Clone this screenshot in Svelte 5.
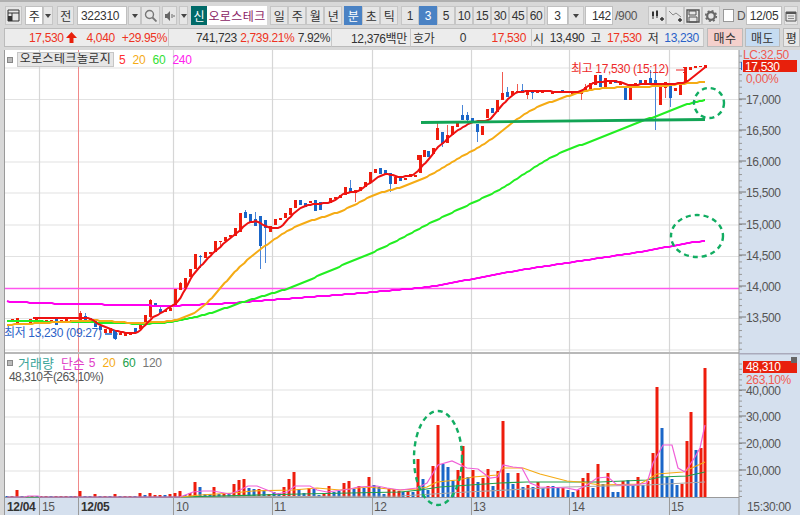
<script>
  const RED = '#ee1c0c', BLUE = '#1a66c8';
  const tfA = ['일', '주', '월', '년'];
  const tfB = [['분', true], ['초', false], ['틱', false]];
  const mins = [['1', false], ['3', true], ['5', false], ['10', false], ['15', false], ['30', false], ['45', false], ['60', false]];

  const vgrid = [39.5, 173.5, 272.5, 372.5, 471.5, 569.5, 669.5];
  const hgrid = [68, 99.5, 131, 162, 193, 225, 256.5, 318.5, 350];
  const vhgrid = [390, 417, 444, 471];
  const priceLabels = [[17000, 99], [16500, 130], [16000, 161], [15500, 192], [15000, 224], [14500, 255], [14000, 286], [13500, 317]];
  const volLabels = [['40,000', 390], ['30,000', 416], ['20,000', 443], ['10,000', 470]];
  const timeLabels = [['15', 42], ['10', 176], ['11', 274], ['12', 374], ['13', 473], ['14', 572], ['15', 671]];

  const ticks = [];
  for (let y = 56; y < 352; y += 6.24) ticks.push(y);
  const vticks = [];
  for (let y = 364; y < 497; y += 5.3) vticks.push(y);

  // x, body top, body bottom, colour (0 red, 1 blue), wick top, wick bottom
  const candles = [
    [12,319,322,0],[17,318,325,0],[22,320,322,0],[30,319,325,0],[36,319,321,0],[41,320,322,1],[46,320,322,0],[51,320,321,0],[56,318,325,1],[61,320,322,0],[66,319,321,0],[71,320,322,0],[75,320,321,1],
    [80,313,322,0,311,323],[85,316,322,1,313,323],[90,318,322,1],[95,320,327,1],[100,326,330,1],[105,329,333,0],[110,328,333,0],[115,331,339,1,330,340],[120,333,335,0],[125,333,336,0],[130,333,335,0],
    [135,328,333,1],[140,325,329,0],[145,315,325,0],[150,300,317,0,299,318],[155,303,305,1],[160,309,313,1,305,313],[165,310,312,0],[170,308,311,0],
    [175,289,306,0],[180,283,290,0,282,290],[185,278,288,0],[190,269,277,0],[195,254,269,0],[200,256,257,1,255,268],[205,252,258,0],[210,252,254,0],[215,241,252,0],[220,241,242,0,241,246],[225,237,241,0],[230,235,237,0],[235,228,236,0],
    [240,213,232,0],[245,212,218,1,210,218],[250,214,222,1],[255,219,226,1,212,226],[260,216,246,1,216,269],[265,220,228,1,220,263],[270,226,232,0],[275,219,225,0],[280,218,220,0],[285,213,218,0],[290,208,215,0],[295,200,208,0],[300,200,205,1],[305,203,207,1],[310,201,203,0],[315,200,211,1],[320,202,210,1],[325,203,204,0],[330,198,203,0],[335,197,199,0],[340,195,198,0],[345,187,195,0],
    [350,188,192,1,180,192],[355,190,193,0,190,202],[360,187,191,0],[365,182,187,0],[370,172,183,0],[375,169,173,0],[380,168,174,1],[385,170,174,1],[390,173,184,1,173,192],[395,177,184,0],[400,177,181,1],[405,178,180,0],[410,174,177,0],[415,175,177,0],[420,155,173,0],[424,150,157,0],
    [418,155,160,0],[428,151,157,1],[433,148,154,0],[437,128,140,0,122,140],[442,132,144,1,132,147],[447,135,143,0,125,143],[452,126,135,0],[457,123,127,0],[462,115,120,1,105,120],[467,115,120,1,112,123],[472,118,123,1],[477,124,132,1,124,142],[482,126,135,0],[487,109,118,0],[492,108,113,1],[497,100,112,0],[502,93,100,0,72,100],[507,92,97,1,87,97],
    [512,91,95,0],[517,91,93,0,84,93],[522,90,93,1,84,93],[527,92,95,0,92,99],[532,91,93,1,91,99],[537,91,93,0],[542,91,93,0],[547,90,92,1],[552,91,94,0],[557,91,93,0],[562,90,93,1],[567,91,93,0],[572,92,94,0],[577,91,93,0],[581,92,94,0,92,100],[585,87,92,0,84,92],[590,83,89,0],[595,75,85,0],[600,75,87,1],[605,78,87,0],[610,80,84,0],[615,80,83,1],[620,82,85,0],
    [625,87,100,1],[630,87,100,0],[635,83,88,0],[640,80,85,1],[645,80,85,0],[650,78,85,1,70,85],[655,80,85,1,72,130],[660,87,105,0],[665,82,88,0,82,98],[670,83,98,1,83,107],[675,88,91,0],[680,83,95,0],[685,67,83,0],[690,67,70,0],[695,66,68,0],[700,66,67,0],[705,65,67,0]
  ];

  const vol = [
    [7,1,1],[12,1,0],[17,7,0],[22,1,1],[27,1,0],[32,1,0],[37,1,1],[41,1,0],[46,1,0],[51,1,1],[56,1,0],[61,1,0],[66,1,0],[71,1,1],[75,1,0],
    [80,6,0],[85,1,1],[90,1,1],[95,3,0],[100,1,1],[105,1,0],[110,1,1],[115,3,0],[120,1,1],[125,1,0],[130,1,0],[135,1,1],[140,4,0],[145,2,1],[150,4,0],[155,2,0],[160,2,0],[165,2,1],[170,3,0],[175,4,0],[180,6,0],[185,2,1],[190,4,0],[195,15,0],[200,10,1],[205,3,1],[210,3,1],[214,10,0],[219,3,1],[224,4,0],[229,4,1],[234,13,0],[239,17,0],[244,18,0],[249,9,1],[254,8,1],[259,8,0],[264,7,1],[269,3,0],[274,5,1],[279,4,1],[284,10,0],[289,18,0],[294,25,0],[299,8,1],[304,4,1],[309,9,0],[314,8,1],[319,2,1],[324,4,0],[329,11,0],[334,5,1],[339,6,1],[344,14,0],[349,16,0],[354,8,1],[359,11,0],[364,9,1],[369,20,0],[374,12,1],[379,10,1],[384,3,1],[389,8,0],[394,8,0],[399,6,0],
    [403,5,1],[408,6,0],[413,5,1],[418,38,0],[423,18,1],[428,7,1],[433,31,0],[438,72,0],[443,33,1],[448,30,1],[453,16,1],[458,27,0],[463,51,0],[468,20,1],[473,27,0],[478,15,1],[483,19,0],[488,28,0],[493,11,1],[498,26,0],[503,76,0],[508,24,1],[513,13,1],[518,24,0],[523,10,1],[528,12,0],[533,10,1],[538,15,0],[543,9,1],[548,11,0],[553,11,1],[558,9,1],[563,9,0],[568,7,1],[573,5,1],[578,7,0],[583,19,0],[588,24,0],[593,9,1],[598,33,0],[603,13,1],[608,24,0],[613,5,1],[618,5,1],[623,16,0],[628,17,1],[633,12,1],[638,20,0],[643,12,1],[648,16,0],[653,44,0],[657,110,0],[662,69,1],[667,20,1],[672,18,1],[677,12,1],[682,13,0],[687,56,0],[691,85,0],[696,47,1],[701,49,0],[705,129,0]
  ];

  // Resample a coarse trace the way the platform draws it: one point every few pixels, on whole pixels.
  function stair(s, win) {
    const p = s.split(' ').map((a) => a.split(',').map(Number));
    const xs = [], ys = [];
    let k = 0;
    for (let x = p[0][0]; x <= p[p.length - 1][0]; x += 2.5) {
      while (k < p.length - 2 && x > p[k + 1][0]) k++;
      const [x0, y0] = p[k], [x1, y1] = p[k + 1];
      xs.push(x);
      ys.push(y0 + ((y1 - y0) * (x - x0)) / (x1 - x0));
    }
    xs.push(p[p.length - 1][0]);
    ys.push(p[p.length - 1][1]);
    return xs.map((x, i) => {
      let sum = 0, n = 0;
      for (let j = Math.max(0, i - win); j <= Math.min(ys.length - 1, i + win); j++) { sum += ys[j]; n++; }
      return `${x},${Math.round(sum / n)}`;
    }).join(' ');
  }

  const ma5 = stair('33,318 60,318 90,318 100,325 113,330 127,333 137,333 143,327 153,317 163,312 170,307 178,302 185,290 192,275 200,267 213,253 228,240 237,233 247,223 258,221 268,228 280,228 287,220 297,210 307,205 327,203 337,200 343,193 357,192 370,183 383,174 390,174 397,177 413,176 423,165 429,160 437,147 443,143 455,132 472,122 490,120 498,110 507,100 517,92 533,91 573,92 580,92 593,83 607,81 617,81 627,85 650,84 667,84 685,83 707,66', 1);
  const ma20 = stair('7,325 60,322 100,320 127,323 167,322 187,318 207,305 220,288 243,263 270,242 297,225 313,220 343,211 377,193 397,189 430,176 455,160 480,147 500,133 513,122 530,110 550,102 580,92 600,88 633,87 667,86 687,83 705,82', 5);
  const ma60 = stair('7,321 80,322 147,324 173,322 213,313 233,305 267,295 293,287 343,265 383,248 430,223 500,190 547,159 567,150 600,138 640,122 667,112 693,102 705,99', 5);
  const ma240 = stair('7,301 33,303 73,304 133,305 170,306 233,303 270,300 350,294 430,287 520,270 600,258 640,252 705,240', 5);

  const vm = '7,497 25,497 28,496 38,496 41,497 180,497 193,492 203,491 213,491 230,494 240,490 248,486 257,486 267,490 277,494 287,492 295,486 310,486 317,490 327,492 350,489 358,487 377,486 387,488 400,490 417,488 427,483 438,465 452,461 467,468 478,469 490,478 498,477 503,465 513,467 522,468 530,483 540,487 567,488 577,490 587,485 597,478 608,477 617,485 633,485 647,483 653,463 663,445 672,445 678,468 685,472 695,457 700,448 705,425';
  const vo = '180,497 200,495 233,493 253,491 293,490 317,488 340,490 367,487 400,490 417,489 427,487 437,482 457,480 473,477 497,475 503,468 523,468 540,474 567,481 580,482 600,485 640,484 657,474 683,472 705,462';
  const vg = '7,497 180,497 300,494 400,492 420,490 440,487 500,483 527,482 600,482 647,480 660,477 687,476 705,472';
  const vy = '180,497 400,496 467,492 567,487 647,485 705,482';
</script>

<div class="page">
  <div class="toolbar">
    <button class="btn w17" aria-label="layout">
      <svg width="13" height="13" viewBox="0 0 13 13"><path d="M1 1h11v11H1zM1 4h11M5 4v8" fill="none" stroke="#333"/><path d="M1 7h4v5H1z" fill="#333"/></svg>
    </button>
    <div class="box w18 ml3">주</div>
    <button class="btn w10 dd" aria-label="open"><i></i></button>
    <button class="btn w17 ml4">전</button>
    <div class="box w50 ml3 left">322310</div>
    <button class="btn w13 ml1 dd" aria-label="open"><i></i></button>
    <button class="btn w19" aria-label="search">
      <svg width="13" height="13" viewBox="0 0 13 13"><circle cx="5.5" cy="5.5" r="4" fill="none" stroke="#777" stroke-width="1.4"/><path d="M8.5 8.5l4 4" stroke="#777" stroke-width="1.8"/></svg>
    </button>
    <button class="btn w15 ml2" aria-label="sound">
      <svg width="12" height="12" viewBox="0 0 12 12"><path d="M1 4h2l3-3v10L3 8H1z" fill="#666"/><path d="M8 4v4M10 5v2" stroke="#666"/></svg>
    </button>
    <button class="btn w9 ml2 dd" aria-label="open"><i></i></button>
    <div class="sin ml3">신</div>
    <div class="name">오로스테크</div>
    {#each tfA as t, i}<button class="btn w18 {i === 0 ? 'ml3' : ''}">{t}</button>{/each}
    {#each tfB as [t, on], i}<button class="btn w18 {i === 0 ? 'ml2' : ''}" class:on>{t}</button>{/each}
    {#each mins as [t, on], i}<button class="btn w18 {i === 0 ? 'ml3' : ''}" class:on>{t}</button>{/each}
    <div class="box w21 ml2">3</div>
    <button class="btn w16 dd" aria-label="open"><i></i></button>
    <div class="box w28 ml1 right">142</div>
    <span class="plain ml2">/900</span>
    <button class="btn w18 ml11" aria-label="add candles">
      <svg width="15" height="15" viewBox="0 0 15 15"><path d="M3 3v8M7 2v8" stroke="#333"/><path d="M2 4h2v4H2zM6 3h2v5H6z" fill="#333"/><path d="M10 11h4M12 9v4" stroke="#333" stroke-width="1.4"/></svg>
    </button>
    <button class="btn w18" aria-label="add line">
      <svg width="15" height="15" viewBox="0 0 15 15"><path d="M1 3l4 4 3-2 5 4" fill="none" stroke="#888"/><path d="M10 12h4M12 10v4" stroke="#333" stroke-width="1.4"/></svg>
    </button>
    <button class="btn w18" aria-label="save">
      <svg width="14" height="14" viewBox="0 0 14 14"><path d="M1 1h12v12H1z" fill="none" stroke="#555" stroke-width="1.4"/><path d="M3 2h7v4H3zM3 8h8v5H3z" fill="none" stroke="#555"/></svg>
    </button>
    <button class="btn w18" aria-label="settings">
      <svg width="14" height="14" viewBox="0 0 14 14"><circle cx="7" cy="7" r="3.8" fill="none" stroke="#666" stroke-width="2.2"/><circle cx="7" cy="7" r="5.3" fill="none" stroke="#666" stroke-width="1.6" stroke-dasharray="2 2.16"/></svg>
    </button>
    <div class="check ml3"></div>
    <span class="plain d">D</span>
    <div class="box w36">12/05</div>
    <button class="btn w14 ml2" aria-label="calendar">
      <svg width="12" height="12" viewBox="0 0 12 12"><path d="M1 2h10v9H1z" fill="none" stroke="#555"/><path d="M1 2h10v2H1z" fill="#555"/><path d="M3 6h6M3 8.500h6" stroke="#888"/></svg>
    </button>
  </div>

  <div class="info">
    <div class="cell c1">
      <span class="r wide-l">17,530<svg class="arrow" width="13" height="13" viewBox="0 0 13 13"><path d="M6.500 1L12 7H8.500v5h-4V7H1z" fill="#e8200c"/></svg></span>
      <span class="r">4,040</span><span class="r">+29.95%</span>
    </div>
    <div class="cell c2"><span class="k">741,723</span><span class="r">2,739.21%</span><span class="k">7.92%</span></div>
    <div class="cell c3"><span class="k">12,376백만</span></div>
    <div class="cell c4"><span class="k">호가</span><span class="k">0</span><span class="r">17,530</span></div>
    <div class="cell c5">
      <span class="k">시</span><span class="k">13,490</span><span class="k">고</span><span class="r">17,530</span><span class="k">저</span><span class="b">13,230</span>
    </div>
    <button class="act buy">매수</button>
    <button class="act sell">매도</button>
    <button class="act flat">평</button>
  </div>

  <div class="chart">
    <svg width="800" height="465" viewBox="0 50 800 465" role="img" aria-label="chart">
      <rect x="0" y="50" width="5" height="465" fill="#d8d8d8" />
      <rect x="5" y="50" width="734" height="447" fill="#fff" />
      <rect x="739" y="50" width="61" height="465" fill="#d5e0ee" />
      <rect x="5" y="497" width="734" height="18" fill="#d5e0ee" />
      <rect x="4" y="50" width="1" height="465" fill="#9a9a9a" />

      {#each hgrid as y}<line x1="5" x2="739" y1={y} y2={y} stroke="#e2e2e2" stroke-width="1.2" />{/each}
      {#each vhgrid as y}<line x1="5" x2="739" y1={y} y2={y} stroke="#e2e2e2" stroke-width="1.2" />{/each}
      {#each vgrid as x}<line x1={x} x2={x} y1="50" y2="515" stroke="#d6d6d6" stroke-width="1.2" />{/each}
      <line x1="78.500" x2="78.500" y1="50" y2="515" stroke="#f08a8a" />
      <rect x="5" y="352" width="734" height="2" fill="#b8b8b8" />
      <rect x="5" y="497" width="734" height="1" fill="#9a9a9a" />

      <line x1="5" x2="739" y1="288.500" y2="288.500" stroke="#ff55ee" stroke-width="1.6" />

      {#each candles as [x, t, b, c, h, l]}
        {#if h !== undefined}<rect x={x} y={h} width="1" height={l - h} fill={c ? '#4a86d8' : '#f05a50'} />{/if}
        <rect x={x - 1} y={t} width="3" height={b - t} fill={c ? BLUE : RED} />
      {/each}

      <polyline points={ma240} fill="none" stroke="#ff00ee" stroke-width="2" />
      <polyline points={ma60} fill="none" stroke="#22ee22" stroke-width="2" />
      <polyline points={ma20} fill="none" stroke="#f5ab14" stroke-width="2" />
      <polyline points={ma5} fill="none" stroke="#ee1111" stroke-width="2" />

      <line x1="421" y1="122.500" x2="705" y2="119.500" stroke="#12a455" stroke-width="2.800" />
      <ellipse cx="709" cy="103" rx="15" ry="15" fill="none" stroke="#12ad62" stroke-width="2.400" stroke-dasharray="5 4" />
      <ellipse cx="697" cy="236" rx="26" ry="21" fill="none" stroke="#12ad62" stroke-width="2.400" stroke-dasharray="5 4" />

      <text x="571" y="73" class="t hi">최고 17,530 (15:12)</text>
      <path d="M676 70h9M683 67l3 3-3 3" fill="none" stroke="#ee2222" />
      <text x="4" y="337" class="t lo">최저 13,230 (09:27)</text>
      <path d="M105 334h7" stroke={BLUE} stroke-width="1.500" />
      <path d="M113 329l5 5-5 5z" fill={BLUE} />

      {#each vol as [x, h, c]}
        <rect x={x - 1.500} y={497 - h} width="3" height={h} fill={c ? BLUE : RED} />
      {/each}
      <polyline points={vy} fill="none" stroke="#a8a8a8" stroke-width="1.200" />
      <polyline points={vg} fill="none" stroke="#22a04a" stroke-width="1.200" />
      <polyline points={vo} fill="none" stroke="#f5ab14" stroke-width="1.200" />
      <polyline points={vm} fill="none" stroke="#f060d8" stroke-width="1.200" />
      <ellipse cx="438" cy="458" rx="24" ry="47" fill="none" stroke="#12ad62" stroke-width="2.400" stroke-dasharray="5 4" />

      <rect x="738.500" y="50" width="1" height="465" fill="#9a9a9a" />
      {#each ticks as y}<line x1="739" x2="742" y1={y} y2={y} stroke="#999" />{/each}
      {#each vticks as y}<line x1="739" x2="742" y1={y} y2={y} stroke="#999" />{/each}
      {#each priceLabels as [, y]}<line x1="739" x2="746" y1={y} y2={y} stroke="#777" />{/each}
      {#each volLabels as [, y]}<line x1="739" x2="746" y1={y} y2={y} stroke="#777" />{/each}
      <rect x="739" y="353" width="61" height="1.500" fill="#aab" />

      {#each priceLabels as [p, y]}<text x="746" y={y + 5} class="t ax">{p.toLocaleString('en-US')}</text>{/each}
      {#each volLabels as [s, y]}<text x="746" y={y + 5} class="t ax">{s}</text>{/each}

      <text x="743" y="59" class="t pink">LC:32,50</text>
      <rect x="741" y="62" width="1" height="8" fill="#2a62c8" />
      <rect x="743" y="60" width="54" height="12" fill="#e8200c" />
      <text x="745" y="70.500" class="t wh">17,530</text>
      <text x="746" y="83" class="t pink">0,00%</text>

      <rect x="743" y="361" width="54" height="12" fill="#e8200c" />
      <text x="746" y="371" class="t wh">48,310</text>
      <text x="746" y="384" class="t pink">263,10%</text>
      <rect x="791" y="357" width="6" height="6" fill="#666" />

      <text x="7" y="511" class="t bold">12/04</text>
      <text x="81" y="511" class="t bold">12/05</text>
      {#each timeLabels as [s, x]}<text x={x} y="511" class="t ax">{s}</text>{/each}
      <text x="747" y="511" class="t ax">15:30:00</text>
      {#each vgrid as x}<line x1={x} x2={x} y1="497" y2="515" stroke="#9a9a9a" />{/each}
      <line x1="78.500" x2="78.500" y1="497" y2="515" stroke="#9a9a9a" />
    </svg>

    <div class="legend top">
      <i class="sq"></i>
      <span class="stock">오로스테크놀로지</span>
      <span class="cr">5</span><span class="co">20</span><span class="cg">60</span><span class="cm">240</span>
    </div>
    <div class="legend vol">
      <i class="sq"></i>
      <span class="ct">거래량</span><span class="cm2">단순</span><span class="cm2 n5">5</span><span class="co">20</span><span class="cg2">60</span><span class="cgr">120</span>
    </div>
    <div class="volnote">48,310주(263,10%)</div>
  </div>
</div>

<style>
  :global(body) { margin: 0; background: #d8d8d8; }
  .page {
    width: 800px; height: 515px; overflow: hidden; background: #d8d8d8;
    font-family: "Liberation Sans", "Noto Sans CJK KR", sans-serif;
    font-size: 12px; color: #333;
  }
  .toolbar {
    display: flex; align-items: stretch; height: 19px;
    padding: 4px 0 0 5px; border-top: 2px solid #b0b0b0; box-sizing: content-box;
  }
  .btn, .box, .act {
    font: inherit; margin: 0; padding: 0; box-sizing: border-box;
    display: flex; align-items: center; justify-content: center; letter-spacing: -0.3px;
  }
  .btn { background: #e6e6e6; border: 1px solid #c6c6c6; color: #333; }
  .btn.on { background: #4a82c4; border-color: #4a82c4; color: #fff; }
  .box { background: #fff; border: 1px solid #c0c0c0; color: #333; }
  .box.left { justify-content: flex-start; padding-left: 3px; }
  .box.right { justify-content: flex-end; padding-right: 1px; }
  .dd i { width: 0; height: 0; border: 3.500px solid transparent; border-top: 4px solid #444; border-bottom: 0; }
  .w9 { width: 9px; } .w10 { width: 10px; } .w13 { width: 13px; } .w14 { width: 14px; } .w15 { width: 15px; }
  .w16 { width: 16px; } .w17 { width: 17px; } .w18 { width: 18px; } .w19 { width: 19px; } .w21 { width: 21px; }
  .w28 { width: 28px; } .w36 { width: 36px; } .w50 { width: 50px; }
  .ml1 { margin-left: 1px; } .ml2 { margin-left: 2px; } .ml3 { margin-left: 3px; } .ml4 { margin-left: 4px; } .ml11 { margin-left: 11px; }
  .sin {
    width: 16px; background: #006a68; color: #fff; display: flex; align-items: center; justify-content: center; box-sizing: border-box;
  }
  .name {
    width: 60px; background: #fff; color: #8a1c64; display: flex; align-items: center; justify-content: center;
    letter-spacing: 0.4px; white-space: nowrap; overflow: hidden;
  }
  .plain { display: flex; align-items: center; color: #555; letter-spacing: -0.3px; width: 22px; }
  .plain.d { width: 9px; margin-left: 3px; }
  .check { width: 11px; height: 13px; align-self: center; background: #fff; border: 1px solid #999; box-sizing: border-box; }

  .info {
    display: flex; height: 19px; margin: 3px 0 0 4px; align-items: stretch;
    letter-spacing: -0.35px; white-space: nowrap;
  }
  .cell {
    display: flex; align-items: center; justify-content: space-between; box-sizing: border-box;
    background: #ececec; border: 1px solid #bbb; border-right-color: #c8c8c8; border-left: 0;
  }
  .c1 { width: 165px; padding: 0 1px 0 24px; border-left: 1px solid #bbb; }
  .c2 { width: 163px; padding: 0 1px 0 27px; }
  .c3 { width: 79px; padding-left: 19px; }
  .c4 { width: 121px; padding: 0 5px 0 2px; }
  .c5 { width: 172px; padding: 0 4px 0 1px; }
  .r { color: #ee3322; display: inline-flex; align-items: center; }
  .k { color: #333; }
  .b { color: #2a62c8; }
  .wide-l { margin-right: 2px; }
  .arrow { margin-left: 1px; }
  .act { border: 1px solid #bbb; color: #333; letter-spacing: 0.5px; }
  .buy { width: 36px; margin-left: 3px; background: #f4d0cc; }
  .sell { width: 35px; margin-left: 2px; background: #c6dcf2; }
  .flat { width: 17px; margin-left: 3px; background: #e8e8e8; }

  .chart { position: relative; margin-top: 3px; height: 465px; }
  .chart svg { display: block; }
  .t { font-family: "Liberation Sans", "Noto Sans CJK KR", sans-serif; font-size: 12px; letter-spacing: -0.35px; }
  .hi { fill: #ee2a2a; }
  .lo { fill: #2a62c8; }
  .ax { fill: #555; }
  .pink { fill: #f05a50; }
  .wh { fill: #fff; }
  .bold { fill: #333; font-weight: 700; }

  .legend { position: absolute; left: 7px; display: flex; align-items: center; gap: 7px; height: 15px; white-space: nowrap; letter-spacing: -0.2px; }
  .legend.top { top: 2px; }
  .legend.vol { top: 305px; }
  .sq { width: 4px; height: 4px; background: #bbb; border: 1px solid #888; margin-right: -2px; }
  .stock { background: #e6e6e6; border: 1px solid #c6c6c6; width: 97px; height: 15px; box-sizing: border-box; line-height: 13px; text-align: center; margin: 0 -2px 0 -1px; overflow: hidden; color: #333; letter-spacing: 0.4px; }
  .cr { color: #ff3030; } .co { color: #f5ab14; } .cg { color: #33e033; } .cm { color: #ff22ee; }
  .ct { color: #3aa59a; font-size: 13px; letter-spacing: 0; } .cm2 { color: #e040c8; font-size: 13px; letter-spacing: 0; }
  .n5 { margin-left: -3px; font-size: 12px; }
  .cg2 { color: #22a04a; } .cgr { color: #777; }
  .volnote { position: absolute; left: 9px; top: 317px; color: #555; letter-spacing: -0.55px; white-space: nowrap; }
</style>
